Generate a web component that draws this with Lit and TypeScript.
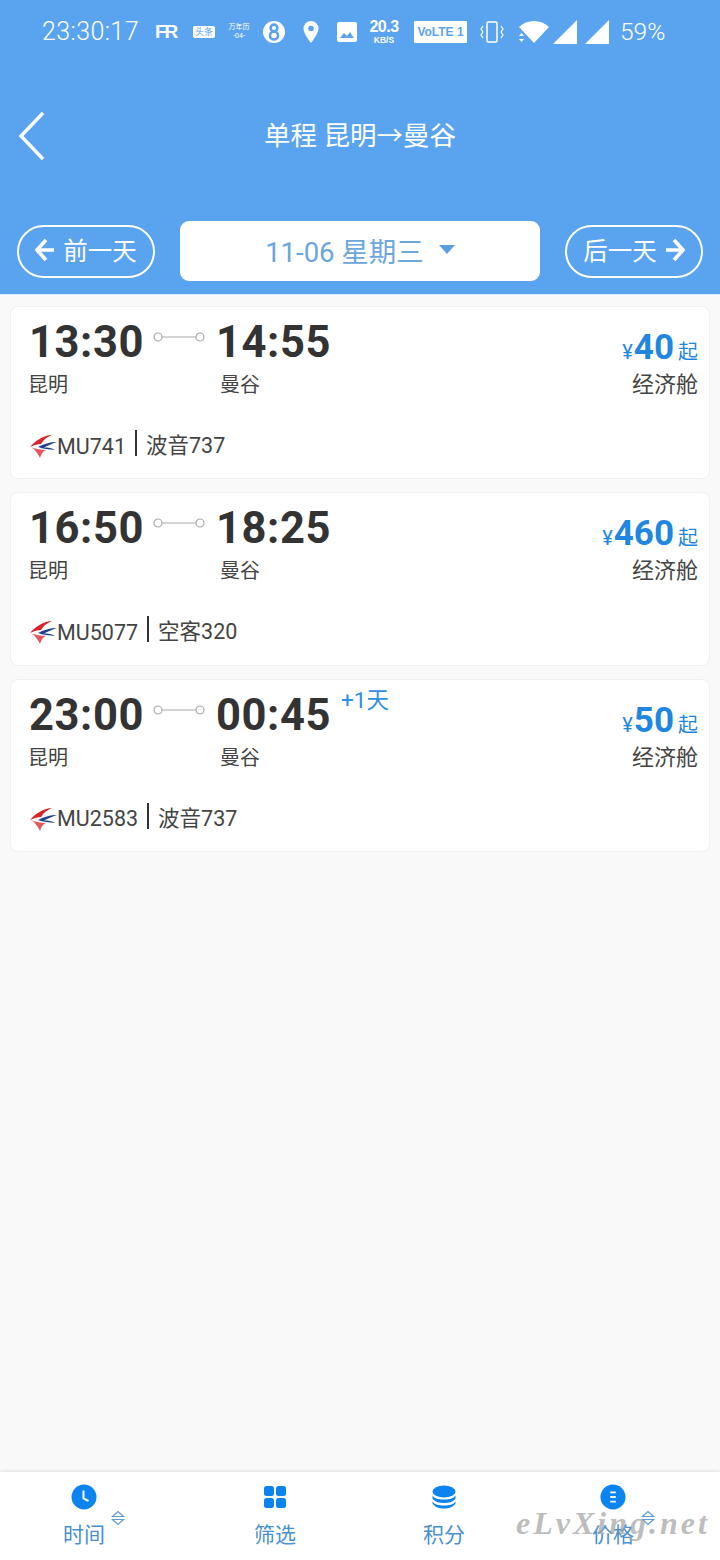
import { LitElement, html, css, svg } from 'lit';
import { customElement } from 'lit/decorators.js';

interface Flight {
  dep: string;
  arr: string;
  no: string;
  plane: string;
  price: string;
  nextDay?: boolean;
}

const flights: Flight[] = [
  { dep: '13:30', arr: '14:55', no: 'MU741', plane: '波音737', price: '40' },
  { dep: '16:50', arr: '18:25', no: 'MU5077', plane: '空客320', price: '460' },
  { dep: '23:00', arr: '00:45', no: 'MU2583', plane: '波音737', price: '50', nextDay: true },
];

const arrow = (dir: 'l' | 'r') => html`<svg class="arrow" width="20" height="26" viewBox="0 0 20 26">
  <path d=${dir === 'l' ? 'M11 3 2 13l9 10M2.5 13H19' : 'M9 3l9 10-9 10M17.5 13H1'} fill="none" stroke="#fff" stroke-width="3.6"/>
</svg>`;

const logo = svg`<svg class="logo" width="27" height="24" viewBox="0 0 27 24">
  <path d="M22 1C14 1 5 7 0 13c4-2 8-3 11-3 2-4 6-7 11-9z" fill="#d8232a"/>
  <path d="M0 13c4 1 7 5 10 11 1-4 3-7 6-8-5 0-10-1-16-3z" fill="#e4575c"/>
  <path d="M8 13c5-3 12-5 19-5-6 2-10 4-13 5.500 4 0 8 .5 11 2.500-6-1-12-1-17-3z" fill="#1f3f8f"/>
</svg>`;

@customElement('status-bar')
export class StatusBar extends LitElement {
  static styles = css`
    :host {
      display: flex;
      align-items: center;
      height: 66px;
      padding: 0 0 3px 42px;
      box-sizing: border-box;
      color: #fff;
      font-family: Roboto, 'Noto Sans CJK SC', sans-serif;
    }
    .time { font-size: 25px; font-weight: 300; width: 112px; letter-spacing: 0.4px; white-space: nowrap; }
    .rr { font: 700 19px 'Liberation Sans', sans-serif; width: 24px; margin-left: 1px; letter-spacing: -2px; }
    .tt {
      font-size: 9px; line-height: 12px; background: #fff; color: #5aa4ef;
      border-radius: 2px; width: 22px; text-align: center; margin-left: 14px;
    }
    .tiny { font-size: 7px; line-height: 9px; width: 24px; text-align: center; margin-left: 12px; }
    svg { display: block; flex: none; }
    .speed { width: 34px; text-align: center; margin-left: 10px; font-family: 'Liberation Sans', sans-serif; font-weight: 700; }
    .speed div:first-child { font-size: 16px; line-height: 16px; letter-spacing: -0.5px; }
    .speed div:last-child { font-size: 8.500px; line-height: 10px; }
    .volte {
      font: 700 12px/22px 'Liberation Sans', sans-serif; background: #fff; color: #5aa4ef;
      width: 53px; height: 22px; text-align: center; margin-left: 13px; border-radius: 1px;
    }
    .pct { font-size: 24.500px; font-weight: 300; margin-left: 11px; }
  `;

  render() {
    return html`
      <span class="time">23:30:17</span>
      <span class="rr">FR</span>
      <span class="tt">头条</span>
      <span class="tiny">万年历<br />-04-</span>
      <svg style="margin-left:12px" width="22" height="24" viewBox="0 0 22 24">
        <circle cx="11" cy="12" r="11" fill="#fff" />
        <circle cx="11" cy="8" r="3.400" fill="none" stroke="#5aa4ef" stroke-width="2.600" />
        <circle cx="11" cy="15.500" r="4" fill="none" stroke="#5aa4ef" stroke-width="2.600" />
      </svg>
      <svg style="margin-left:18px" width="16" height="24" viewBox="0 0 16 24">
        <path d="M8 1a7.500 7.500 0 0 0-7.500 7.500C.5 14 8 23 8 23s7.500-9 7.500-14.500A7.500 7.500 0 0 0 8 1z" fill="#fff" />
        <circle cx="8" cy="8.500" r="2.800" fill="#5aa4ef" />
      </svg>
      <svg style="margin-left:18px" width="20" height="20" viewBox="0 0 20 20">
        <rect width="20" height="20" rx="2" fill="#fff" />
        <path d="M3 16l4-5 3 3 3-4 4 6z" fill="#5aa4ef" />
      </svg>
      <div class="speed"><div>20.3</div><div>KB/S</div></div>
      <span class="volte">VoLTE 1</span>
      <svg style="margin-left:13px" width="24" height="24" viewBox="0 0 24 24" fill="none" stroke="#fff" stroke-width="1.500">
        <rect x="7" y="2" width="10" height="20" rx="1.500" />
        <path d="M3 6 1 9l2 3-2 3 2 3M21 6l2 3-2 3 2 3-2 3" stroke-width="1.200" />
      </svg>
      <svg style="margin-left:13px" width="34" height="26" viewBox="0 0 34 26">
        <path d="M2 8c8-8 22-8 30 0L17 24z" fill="#fff" />
        <path d="M2 17l2.500-3 2.500 3zM2 20l2.500 3 2.500-3z" fill="#fff" />
      </svg>
      <svg style="margin-left:2px" width="24" height="24" viewBox="0 0 24 24"><path d="M24 0v24H0z" fill="#fff" /></svg>
      <svg style="margin-left:8px" width="24" height="24" viewBox="0 0 24 24"><path d="M24 0v24H0z" fill="#fff" /></svg>
      <span class="pct">59%</span>
    `;
  }
}

@customElement('app-root')
export class AppRoot extends LitElement {
  static styles = css`
    :host {
      position: relative;
      width: 720px;
      height: 1560px;
      overflow: hidden;
      background: #f9f9f9;
      font-family: Roboto, 'Noto Sans CJK SC', sans-serif;
      display: flex;
      flex-direction: column;
    }
    .top { background: #5aa4ef; height: 295px; flex: none; border-bottom: 1px solid #dbe9f8; box-sizing: border-box; }
    .title-row {
      height: 139px;
      box-sizing: border-box;
      display: flex;
      align-items: center;
      justify-content: center;
      position: relative;
      color: #fff;
      font-size: 26.500px;
      padding-bottom: 4px;
    }
    .back { position: absolute; left: 18px; top: 45px; }
    .date-row {
      display: flex;
      align-items: center;
      justify-content: space-between;
      padding: 0 17px;
      margin-top: 16px;
    }
    .pill {
      width: 138px;
      height: 53px;
      box-sizing: border-box;
      border: 2px solid #fff;
      border-radius: 27px;
      color: #fff;
      font-size: 24.500px;
      padding-bottom: 3px;
      display: flex;
      align-items: center;
      justify-content: center;
      gap: 8px;
    }
    .date {
      width: 360px;
      height: 60px;
      background: #fff;
      border-radius: 9px;
      color: #6ba6dc;
      font-size: 27.500px;
      padding-bottom: 3px;
      display: flex;
      align-items: center;
      justify-content: center;
      gap: 15px;
      box-sizing: border-box;
    }
    .caret { width: 0; height: 0; border: 8.500px solid transparent; border-top: 9px solid #5a9fe0; border-bottom: 0; }
    .list {
      flex: 1;
      padding: 11px 10px 0;
      display: flex;
      flex-direction: column;
      gap: 13px;
    }
    .card {
      height: 173.400px;
      flex: none;
      background: #fff;
      border: 1px solid #f1f1f1;
      border-radius: 8px;
      box-sizing: border-box;
      padding: 5px 11px 0 14px;
      display: flex;
      justify-content: space-between;
    }
    .times { display: flex; align-items: flex-start; height: 56px; }
    .t {
      font-size: 43.500px;
      font-weight: 700;
      color: #333;
      line-height: 56px;
      letter-spacing: 0.6px;
      text-align: right;
      flex: none;
      margin-top: 3px;
    }
    .dep { width: 119px; }
    .arr { width: 126px; }
    .conn { width: 52px; margin: 19px 0 0 9px; flex: none; }
    .plus { color: #2f8fe0; font-size: 22.500px; line-height: 32px; margin-left: 10px; margin-top: -1px; }
    .cities { display: flex; font-size: 20px; color: #444; line-height: 28px; margin: 3px 0 0 3px; }
    .cities span:first-child { width: 192px; }
    .info { display: flex; align-items: center; margin: 31px 0 0 5px; font-size: 21.500px; color: #444; height: 28px; }
    .logo { flex: none; margin-top: 4px; }
    .no { padding: 4px 9px 0 0; }
    .plane { border-left: 2px solid #333; padding-left: 9px; line-height: 26px; height: 26px; margin-top: -2px; }
    .plane-text { position: relative; top: 3px; }
    .right { text-align: right; }
    .price { color: #1f87e0; line-height: 40px; margin-top: 16px; display: flex; justify-content: flex-end; align-items: baseline; }
    .cur { font-size: 20px; }
    .num { font-size: 35px; font-weight: 700; margin: 0 4px 0 1px; }
    .qi { font-size: 20px; }
    .cabin { font-size: 22px; color: #444; line-height: 30px; margin-top: -2px; }
    .tabs {
      flex: none;
      height: 88px;
      background: #fff;
      box-shadow: 0 -1px 3px rgba(0, 0, 0, 0.1);
      display: grid;
      grid-template-columns: 168px 214px 124px 214px;
      position: relative;
    }
    .tab { position: relative; display: flex; flex-direction: column; align-items: center; padding-top: 12px; color: #4a90d0; font-size: 21px; line-height: 30px; }
    .tab svg.ico { display: block; margin-bottom: 10px; height: 26px; }
    .sort { position: absolute; top: 38px; left: 111px; }
    .tab:last-child .sort { left: 135px; }
    .mark {
      position: absolute;
      left: 516px;
      top: 1505px;
      font: italic 700 32px 'Liberation Serif', serif;
      color: rgba(160, 160, 160, 0.7);
      letter-spacing: 3px;
      white-space: nowrap;
    }
  `;

  private sortIcon() {
    return html`<svg class="sort" width="14" height="16" viewBox="0 0 14 16" fill="none" stroke="#5a9ad8" stroke-width="1.200">
      <path d="M1.500 6.500 7 1.500l5.500 5zM1.500 9.500 7 14.500l5.500-5z" />
    </svg>`;
  }

  private card(f: Flight) {
    return html`<div class="card">
      <div>
        <div class="times">
          <span class="t dep">${f.dep}</span>
          <svg class="conn" width="52" height="12" viewBox="0 0 52 12" fill="none" stroke="#aaa" stroke-width="1.200">
            <circle cx="5" cy="6" r="4" />
            <circle cx="47" cy="6" r="4" />
            <path d="M9 6h34" />
          </svg>
          <span class="t arr">${f.arr}</span>
          ${f.nextDay ? html`<span class="plus">+1天</span>` : ''}
        </div>
        <div class="cities"><span>昆明</span><span>曼谷</span></div>
        <div class="info">
          ${logo}
          <span class="no">${f.no}</span>
          <span class="plane"><span class="plane-text">${f.plane}</span></span>
        </div>
      </div>
      <div class="right">
        <div class="price"><span class="cur">¥</span><span class="num">${f.price}</span><span class="qi">起</span></div>
        <div class="cabin">经济舱</div>
      </div>
    </div>`;
  }

  render() {
    return html`
      <div class="top">
        <status-bar></status-bar>
        <div class="title-row">
          <svg class="back" width="28" height="50" viewBox="0 0 28 50" fill="none" stroke="#fff" stroke-width="3.400">
            <path d="M25 2 3 25l22 23" />
          </svg>
          单程 昆明→曼谷
        </div>
        <div class="date-row">
          <div class="pill">${arrow('l')}前一天</div>
          <div class="date">11-06 星期三 <span class="caret"></span></div>
          <div class="pill">后一天${arrow('r')}</div>
        </div>
      </div>
      <div class="list">${flights.map((f) => this.card(f))}</div>
      <div class="tabs">
        <div class="tab">
          <svg class="ico" width="26" height="26" viewBox="0 0 26 26">
            <circle cx="13" cy="13" r="12.500" fill="#0c84f0" />
            <path d="M12.500 6.500v8l5 2.500" fill="none" stroke="#fff" stroke-width="2" />
          </svg>
          时间 ${this.sortIcon()}
        </div>
        <div class="tab">
          <svg class="ico" width="24" height="26" viewBox="0 0 24 24" fill="#0c84f0">
            <rect x="1" y="1" width="10" height="10" rx="2.500" />
            <rect x="13" y="1" width="10" height="10" rx="2.500" />
            <rect x="1" y="13" width="10" height="10" rx="2.500" />
            <rect x="13" y="13" width="10" height="10" rx="2.500" />
          </svg>
          筛选
        </div>
        <div class="tab">
          <svg class="ico" width="24" height="26" viewBox="0 0 24 24" fill="#0c84f0">
            <ellipse cx="12" cy="6.500" rx="11.500" ry="6" />
            <path d="M.5 10.500c2 3 6 4 11.500 4s9.500-1 11.500-4v3c-2 3-6 4.500-11.500 4.500S2.500 16.500.5 13.500z" />
            <path d="M.5 16.500c2 3 6 4 11.500 4s9.500-1 11.500-4v2c-2 3-6 5-11.500 5S2.500 21.500.5 18.500z" />
          </svg>
          积分
        </div>
        <div class="tab">
          <svg class="ico" width="28" height="26" viewBox="0 0 28 28">
            <circle cx="14" cy="14" r="13.500" fill="#0c84f0" />
            <path d="M11 9h6M11 14h6M11 19h6" stroke="#fff" stroke-width="2" />
          </svg>
          价格 ${this.sortIcon()}
        </div>
      </div>
      <div class="mark">eLvXing.net</div>
    `;
  }
}
